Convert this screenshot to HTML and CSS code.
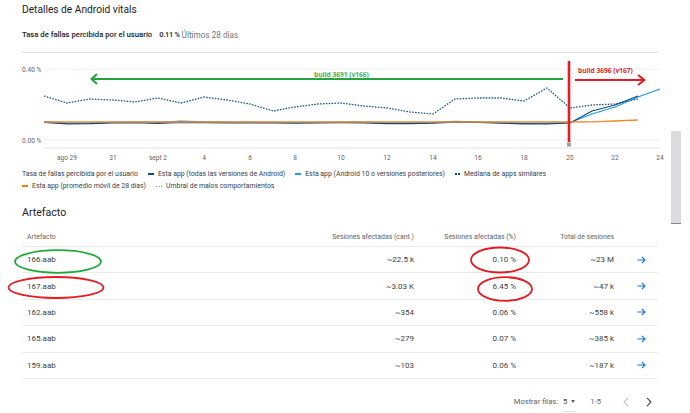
FILE: index.html
```html
<!DOCTYPE html>
<html lang="es">
<head>
<meta charset="utf-8">
<title>Detalles de Android vitals</title>
<link rel="stylesheet" href="styles.css">
</head>
<body>
<div class="page">
  <h1 class="title">Detalles de Android vitals</h1>
  <div class="metric">
    <span class="metric-label">Tasa de fallas percibida por el usuario</span>
    <span class="metric-value">0.11 %</span>
    <span class="metric-period">Últimos 28 días</span>
  </div>
  <hr class="divider">

  <svg class="chart" viewBox="22 58 646 108" width="646" height="108">
    <g class="grid">
      <line x1="44" y1="69" x2="660" y2="69"/>
      <line x1="44" y1="140" x2="660" y2="140"/>
    </g>
    <line class="axis" x1="44" y1="148" x2="660" y2="148"/>
    <g class="ylabels">
      <text x="22" y="71.5">0.40 %</text>
      <text x="22" y="142.5">0.00 %</text>
    </g>
    <g class="xlabels">
      <text x="67" y="159.5">ago 29</text>
      <text x="113" y="159.5">31</text>
      <text x="158" y="159.5">sept 2</text>
      <text x="204" y="159.5">4</text>
      <text x="250" y="159.5">6</text>
      <text x="295" y="159.5">8</text>
      <text x="341" y="159.5">10</text>
      <text x="387" y="159.5">12</text>
      <text x="433" y="159.5">14</text>
      <text x="478" y="159.5">16</text>
      <text x="524" y="159.5">18</text>
      <text x="570" y="159.5">20</text>
      <text x="615" y="159.5">22</text>
      <text x="660" y="159.5">24</text>
    </g>
    <polyline class="l-median" points="44,96 67,103 90,99 113,100 135,102 158,98 181,103 204,97 227,100 250,104 273,111 295,107 318,104 341,103 364,106 387,108 410,112 433,114 455,99 478,98 501,98 524,101 547,88 570,108 592,105 615,104 638,99"/>
    <polyline class="l-a10" points="44,121.6 67,123.2 90,123 113,122.3 135,122 158,122.5 181,121.2 204,121.8 227,122.2 250,122.4 273,122.3 295,122.6 318,122.4 341,122.2 364,122.2 387,123 410,123 433,122.5 455,121.3 478,122 501,122.6 524,123.3 547,123.2 570,122.5 592,114 615,107 638,97 660,89"/>
    <polyline class="l-all" points="44,122.4 67,123.8 90,123.6 113,122.8 135,122.6 158,123.4 181,122.4 204,122.6 227,122.8 250,122.9 273,122.9 295,123.2 318,122.9 341,122.7 364,122.9 387,123.6 410,123.6 433,123.1 455,122.2 478,122.5 501,123.2 524,123.9 547,123.8 570,123 592,111 615,105 638,96"/>
    <polyline class="l-avg" points="44,122 570,122 592,121.8 615,121 638,120"/>

    <g class="anno-green">
      <line x1="92" y1="79" x2="563" y2="79"/>
      <polyline points="97,74 91.5,79 97,84"/>
      <text x="314" y="76.5">build 3691 (v166)</text>
    </g>
    <g class="anno-red">
      <line class="vline" x1="569" y1="61" x2="569" y2="142"/>
      <line x1="575" y1="80" x2="643" y2="80"/>
      <polyline points="638,75 644.5,80 638,85"/>
      <text x="578" y="73">build 3696 (v167)</text>
    </g>
    <rect class="marker" x="567" y="142.5" width="4" height="4"/>
  </svg>

  <div class="legend">
    <div class="legend-row">
      <span class="legend-item">Tasa de fallas percibida por el usuario</span>
      <span class="legend-item"><i class="swatch swatch-all"></i>Esta app (todas las versiones de Android)</span>
      <span class="legend-item"><i class="swatch swatch-a10"></i>Esta app (Android 10 o versiones posteriores)</span>
      <span class="legend-item"><i class="swatch swatch-median"></i>Mediana de apps similares</span>
    </div>
    <div class="legend-row">
      <span class="legend-item"><i class="swatch swatch-avg"></i>Esta app (promedio móvil de 28 días)</span>
      <span class="legend-item"><i class="swatch swatch-threshold"></i>Umbral de malos comportamientos</span>
    </div>
  </div>

  <h2 class="section-title">Artefacto</h2>

  <div class="table">
    <div class="row head">
      <span class="cell first">Artefacto</span>
      <span class="cell num">Sesiones afectadas (cant.)</span>
      <span class="cell num">Sesiones afectadas (%)</span>
      <span class="cell num">Total de sesiones</span>
      <span class="cell"></span>
    </div>
    <div class="row">
      <span class="cell first">166.aab</span>
      <span class="cell num">~22.5 k</span>
      <span class="cell num">0.10 %</span>
      <span class="cell num">~23 M</span>
      <span class="cell go"><svg class="go-icon" viewBox="0 0 9 8" width="9" height="8"><path d="M0.3 4H8M4.9 0.9L8 4L4.9 7.1"/></svg></span>
    </div>
    <div class="row">
      <span class="cell first">167.aab</span>
      <span class="cell num">~3.03 K</span>
      <span class="cell num">6.45 %</span>
      <span class="cell num">~47 k</span>
      <span class="cell go"><svg class="go-icon" viewBox="0 0 9 8" width="9" height="8"><path d="M0.3 4H8M4.9 0.9L8 4L4.9 7.1"/></svg></span>
    </div>
    <div class="row">
      <span class="cell first">162.aab</span>
      <span class="cell num">~354</span>
      <span class="cell num">0.06 %</span>
      <span class="cell num">~558 k</span>
      <span class="cell go"><svg class="go-icon" viewBox="0 0 9 8" width="9" height="8"><path d="M0.3 4H8M4.9 0.9L8 4L4.9 7.1"/></svg></span>
    </div>
    <div class="row">
      <span class="cell first">165.aab</span>
      <span class="cell num">~279</span>
      <span class="cell num">0.07 %</span>
      <span class="cell num">~385 k</span>
      <span class="cell go"><svg class="go-icon" viewBox="0 0 9 8" width="9" height="8"><path d="M0.3 4H8M4.9 0.9L8 4L4.9 7.1"/></svg></span>
    </div>
    <div class="row">
      <span class="cell first">159.aab</span>
      <span class="cell num">~103</span>
      <span class="cell num">0.06 %</span>
      <span class="cell num">~187 k</span>
      <span class="cell go"><svg class="go-icon" viewBox="0 0 9 8" width="9" height="8"><path d="M0.3 4H8M4.9 0.9L8 4L4.9 7.1"/></svg></span>
    </div>
  </div>

  <div class="pagination">
    <span class="rows-label">Mostrar filas:</span>
    <span class="rows-select">5<i class="caret"></i></span>
    <span class="range">1-5</span>
    <svg class="chev chev-prev" viewBox="0 0 6 10" width="6" height="10"><path d="M5 0.8L1 5L5 9.2"/></svg>
    <svg class="chev chev-next" viewBox="0 0 6 10" width="6" height="10"><path d="M1 0.8L5 5L1 9.2"/></svg>
  </div>

  <div class="scrollbar"></div>

  <svg class="annotations" viewBox="0 0 690 413" width="690" height="413">
    <ellipse class="ring-green" cx="58" cy="261.5" rx="43" ry="11.3"/>
    <ellipse class="ring-red" cx="56" cy="287.5" rx="47.5" ry="10.5"/>
    <ellipse class="ring-red" cx="500" cy="260" rx="29" ry="12.5"/>
    <ellipse class="ring-red" cx="505" cy="289" rx="27" ry="11.8"/>
  </svg>
</div>
</body>
</html>
```

FILE: styles.css
```css
html, body {
  margin: 0;
  padding: 0;
  background: #ffffff;
}

body {
  font-family: Roboto, "Liberation Sans", Arial, sans-serif;
  color: #3c4043;
}

.page {
  position: relative;
  width: 690px;
  height: 413px;
  padding-left: 22px;
  box-sizing: border-box;
  overflow: hidden;
}

.title {
  margin: 3px 0 0;
  font-size: 10.2px;
  line-height: 14px;
  font-weight: 400;
  color: #202124;
}

.metric {
  display: flex;
  align-items: center;
  margin-top: 13px;
  height: 10px;
  line-height: 10px;
  white-space: nowrap;
}

.metric-label {
  font-size: 7.7px;
  font-weight: 500;
  color: #202124;
  margin-right: 7px;
}

.metric-value {
  font-size: 7.4px;
  letter-spacing: -0.3px;
  font-weight: 700;
  color: #3c4043;
  margin-right: 2px;
}

.metric-period {
  font-size: 8.2px;
  color: #70757a;
}

.divider {
  margin: 12px 0 0;
  width: 636px;
  height: 0;
  border: 0;
  border-top: 1px solid #e0e0e0;
}

/* chart */
.chart {
  display: block;
  margin-top: 5px;
  overflow: visible;
}

.grid line {
  stroke: #efefef;
  stroke-width: 1;
}

.axis {
  stroke: #e3e3e3;
  stroke-width: 1;
}

.ylabels text,
.xlabels text {
  font-family: Roboto, "Liberation Sans", sans-serif;
  font-size: 6.6px;
  fill: #5f6368;
}

.xlabels text {
  text-anchor: middle;
}

.chart polyline {
  fill: none;
  stroke-linejoin: round;
}

.l-median {
  stroke: #1b5a8c;
  stroke-width: 1.3;
  stroke-dasharray: 1.6 1.3;
}

.l-a10 {
  stroke: #2196f3;
  stroke-width: 1.3;
}

.l-all {
  stroke: #0f4c7e;
  stroke-width: 1.2;
}

.l-avg {
  stroke: #ee8b2c;
  stroke-width: 1.3;
}

.anno-green line,
.anno-green polyline {
  stroke: #25a43d;
  stroke-width: 2.1;
  fill: none;
}

.anno-green text {
  font-family: "Open Sans", Roboto, sans-serif;
  font-size: 6.6px;
  font-weight: 700;
  fill: #3cb54f;
}

.anno-red line,
.anno-red polyline {
  stroke: #e51c23;
  stroke-width: 2;
  fill: none;
}

.anno-red .vline {
  stroke-width: 2.6;
}

.anno-red text {
  font-family: "Open Sans", Roboto, sans-serif;
  font-size: 6.6px;
  font-weight: 700;
  fill: #e8232a;
}

.marker {
  fill: #9e9e9e;
}

/* legend */
.legend {
  margin-top: 2px;
  font-size: 6.9px;
  line-height: 12px;
  color: #3c4043;
}

.legend-row {
  display: flex;
  gap: 10px;
  white-space: nowrap;
}

.legend-item {
  display: flex;
  align-items: center;
}

.swatch {
  display: inline-block;
  width: 6px;
  height: 2px;
  margin-right: 4px;
}

.swatch-all {
  background: #0f4c7e;
}

.swatch-a10 {
  background: #2196f3;
}

.swatch-avg {
  background: #ee7d1a;
}

.swatch-median {
  width: 5px;
  background: repeating-linear-gradient(90deg, #0f4c7e 0 2px, transparent 2px 3px);
}

.swatch-threshold {
  background: repeating-linear-gradient(90deg, #80868b 0 1px, transparent 1px 2.5px);
  height: 1px;
}

/* section */
.section-title {
  margin: 14px 0 0;
  font-size: 10.6px;
  line-height: 14px;
  font-weight: 400;
  color: #202124;
}

.table {
  margin-top: 8px;
  width: 636px;
}

.row {
  display: grid;
  grid-template-columns: 278px 114px 102px 98px 44px;
  align-items: center;
  height: 25.4px;
  border-bottom: 1px solid #eaeaea;
  font-size: 8px;
  color: #3c4043;
  white-space: nowrap;
}

.row.head {
  height: 18px;
  font-size: 6.9px;
  color: #5f6368;
}

.cell.first {
  padding-left: 5px;
}

.cell.num {
  text-align: right;
}

.cell.go {
  padding-left: 23px;
  display: flex;
  align-items: center;
}

.go-icon path {
  fill: none;
  stroke: #1a73e8;
  stroke-width: 1.2;
}

/* pagination */
.pagination {
  display: flex;
  justify-content: flex-end;
  align-items: center;
  width: 630px;
  height: 12px;
  margin-top: 17px;
  font-size: 7.6px;
  color: #5f6368;
  white-space: nowrap;
}

.rows-select {
  position: relative;
  display: flex;
  align-items: center;
  margin-left: 5px;
  padding-right: 1px;
  color: #3c4043;
}

.rows-select::after {
  content: "";
  position: absolute;
  left: 0;
  right: 0;
  bottom: -6px;
  border-bottom: 1px solid #e0e0e0;
}

.caret {
  display: inline-block;
  margin-left: 4px;
  width: 0;
  height: 0;
  border-left: 2.5px solid transparent;
  border-right: 2.5px solid transparent;
  border-top: 3px solid #5f6368;
}

.range {
  margin-left: 14px;
}

.chev path {
  fill: none;
  stroke-width: 1.1;
}

.chev-prev {
  margin-left: 22px;
}

.chev-prev path {
  stroke: #bdc1c6;
}

.chev-next {
  margin-left: 17px;
}

.chev-next path {
  stroke: #3c4043;
}

/* overlays */
.scrollbar {
  position: absolute;
  left: 671px;
  top: 131px;
  width: 10px;
  height: 92px;
  background: #dadce0;
  border-bottom: 1px solid #80868b;
}

.annotations {
  position: absolute;
  left: 0;
  top: 0;
  pointer-events: none;
}

.annotations ellipse {
  fill: none;
  stroke-width: 1.8;
}

.ring-green {
  stroke: #22a83a;
}

.ring-red {
  stroke: #e51c23;
}
```
